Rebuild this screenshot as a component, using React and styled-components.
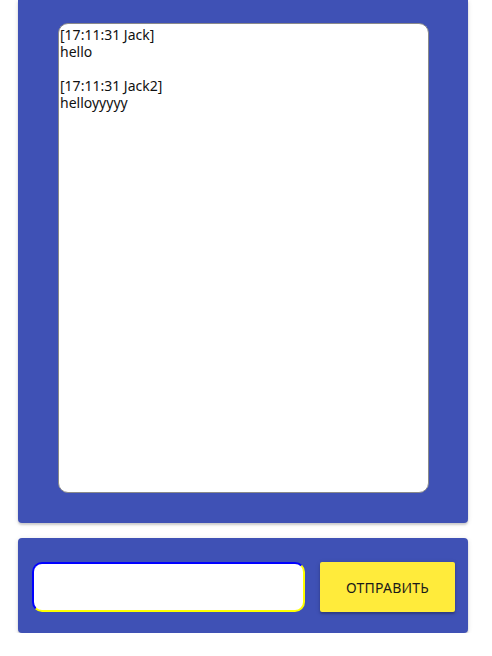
import React, { useState } from 'react';
import styled, { createGlobalStyle } from 'styled-components';

const GlobalStyle = createGlobalStyle`
  html, body {
    margin: 0;
    padding: 0;
    background: #fff;
    font-family: "Noto Sans", "Open Sans", sans-serif;
  }
`;

const Page = styled.div`
  width: 450px;
  margin: 0 0 0 18px;
  display: flex;
  flex-direction: column;
  gap: 15px;
`;

const Panel = styled.div`
  background-color: #3f51b5;
  border-radius: ${(p) => (p.$top ? '0 0 4px 4px' : '4px')};
  box-shadow: 0 2px 2px rgba(0, 0, 0, 0.14), 0 1px 5px rgba(0, 0, 0, 0.12);
`;

const ChatPanel = styled(Panel)`
  padding: 23px 39px 30px 40px;
`;

const ChatBox = styled.div`
  box-sizing: border-box;
  height: 470px;
  background: #fff;
  border: 1px solid #8a8a8a;
  border-radius: 10px;
  padding: 2px 1px;
  overflow-y: auto;
  font-size: 14px;
  line-height: 17px;
  color: #111;
`;

const Message = styled.div`
  margin-bottom: 17px;
`;

const SendPanel = styled(Panel)`
  display: flex;
  align-items: center;
  gap: 15px;
  padding: 24px 13px 21px 14px;
`;

const Input = styled.input`
  box-sizing: border-box;
  width: 273px;
  height: 50px;
  border: 2px solid;
  border-color: #0000ff #ffff00 #ffff00 #0000ff;
  border-radius: 10px;
  background: #fff;
  outline: none;
  padding: 0 10px;
  font-family: inherit;
  font-size: 14px;
`;

const SendButton = styled.button`
  flex: 1;
  height: 50px;
  background-color: #ffeb3b;
  color: #1a1a1a;
  border: none;
  border-radius: 2px;
  font-family: inherit;
  font-size: 14px;
  letter-spacing: 0.2px;
  cursor: pointer;
  box-shadow: 0 2px 2px rgba(0, 0, 0, 0.2), 0 1px 5px rgba(0, 0, 0, 0.15);
`;

const messages = [
  { time: '17:11:31', user: 'Jack', text: 'hello' },
  { time: '17:11:31', user: 'Jack2', text: 'helloyyyyy' },
];

const App = () => {
  const [value, setValue] = useState('');

  return (
    <>
      <GlobalStyle />
      <Page>
        <ChatPanel $top>
          <ChatBox>
            {messages.map((m, i) => (
              <Message key={i}>
                [{m.time} {m.user}]
                <br />
                {m.text}
              </Message>
            ))}
          </ChatBox>
        </ChatPanel>
        <SendPanel>
          <Input value={value} onChange={(e) => setValue(e.target.value)} />
          <SendButton>ОТПРАВИТЬ</SendButton>
        </SendPanel>
      </Page>
    </>
  );
};

export default App;
